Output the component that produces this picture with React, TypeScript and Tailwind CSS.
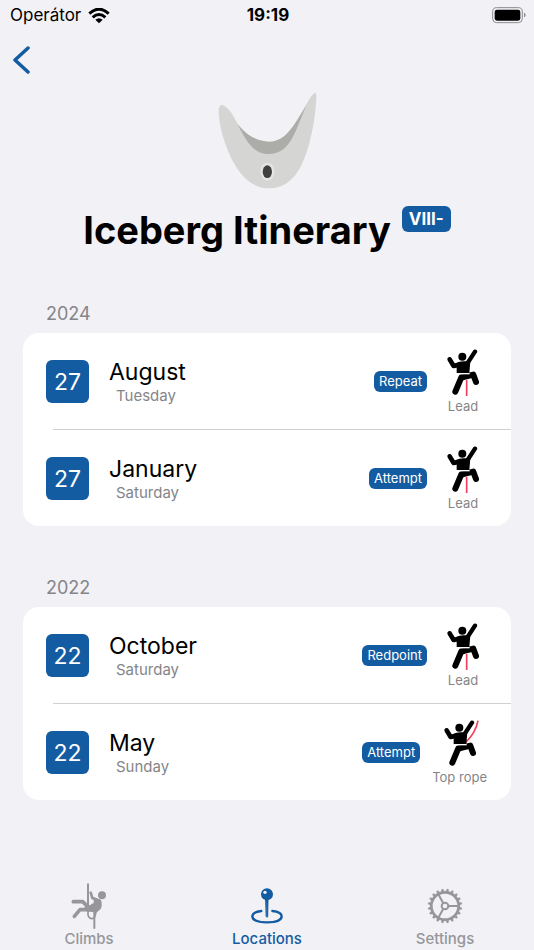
import type { ReactNode } from 'react';

type Style = 'lead' | 'topRope';

interface Ascent {
  day: number;
  month: string;
  weekday: string;
  result: string;
  style: Style;
}

interface Year {
  year: number;
  ascents: Ascent[];
}

const years: Year[] = [
  {
    year: 2024,
    ascents: [
      { day: 27, month: 'August', weekday: 'Tuesday', result: 'Repeat', style: 'lead' },
      { day: 27, month: 'January', weekday: 'Saturday', result: 'Attempt', style: 'lead' },
    ],
  },
  {
    year: 2022,
    ascents: [
      { day: 22, month: 'October', weekday: 'Saturday', result: 'Redpoint', style: 'lead' },
      { day: 22, month: 'May', weekday: 'Sunday', result: 'Attempt', style: 'topRope' },
    ],
  },
];

function StatusBar() {
  return (
    <div className="grid grid-cols-3 items-center h-8 pl-[10px] pr-2">
      <div className="flex items-center gap-[7px] text-[17px]">
        <span>Operátor</span>
        <svg width="22" height="16" viewBox="0 0 66 48" fill="none" stroke="#000" strokeWidth="9">
          <path d="M4 17Q33-10 62 17" />
          <path d="M14 28Q33 11 52 28" />
          <path d="M22 35L33 46L44 35Q33 26 22 35Z" fill="#000" stroke="none" />
        </svg>
      </div>
      <span className="text-center text-[17px] font-bold">19:19</span>
      <svg className="justify-self-end" width="34" height="18" viewBox="0 0 102 54">
        <rect x="2" y="2" width="89" height="45" rx="12" fill="none" stroke="#8b8b8f" strokeWidth="3" />
        <rect x="8" y="8" width="77" height="33" rx="7" />
        <path d="M96 17Q101 18 101 24T96 31Z" fill="#8b8b8f" />
      </svg>
    </div>
  );
}

function Hold() {
  return (
    <svg width="100" height="96" viewBox="51 39 300 288">
      <path
        d="M90 98C120 150 160 185 208 185C260 185 285 130 328 60L332 100L270 230H140Z"
        fill="#acaca9"
      />
      <path
        d="M56 88C57 76 65 71 75 79C84 86 93 96 100 108C130 163 150 222 206 222C270 222 285 155 316 83C323 66 332 48 343 39C348 37 350 45 349 58C345 120 331 205 302 260C281 301 248 325 207 325C164 325 130 298 105 255C77 207 55 137 56 88Z"
        fill="#d5d5d4"
      />
      <ellipse cx="202" cy="275" rx="21" ry="27" fill="#e6e6e5" />
      <ellipse cx="202" cy="275" rx="14" ry="19" fill="#414141" />
    </svg>
  );
}

function Climber({ style }: { style: Style }) {
  return (
    <svg width="40" height="48" viewBox="39 29 120 144">
      {style === 'lead' ? (
        <path d="M110 122V170" stroke="#f0405c" strokeWidth="5" />
      ) : (
        <path d="M153 31Q146 68 116 96" fill="none" stroke="#f0405c" strokeWidth="5" />
      )}
      <circle cx="97" cy="52" r="12" />
      <path d="M76 72Q90 65 104 66L121 66L118 101H80V84Z" />
      <g fill="none" stroke="#000" strokeLinecap="round" strokeLinejoin="round">
        <path d="M59 60L71 80L88 76" strokeWidth="14" />
        <path d="M135 37L112 72" strokeWidth="13" />
        <path d="M94 114L76 157" strokeWidth="18" />
        <path d="M97 114L130 106L138 128" strokeWidth="18" />
      </g>
      <path d="M78 103H119" stroke="#fff" strokeWidth="4" />
    </svg>
  );
}

function AscentRow({ ascent }: { ascent: Ascent }) {
  return (
    <li className="group">
      <div className="flex items-center h-24 pl-[23px] pr-6">
        <span className="flex items-center justify-center size-[43px] pt-[2px] rounded-md bg-[#145ca2] text-white text-[23px]">
          {ascent.day}
        </span>
        <div className="ml-5 pt-[2px]">
          <p className="text-[23px] leading-7">{ascent.month}</p>
          <p className="pl-[7px] text-[15px] leading-5 text-[#858589]">{ascent.weekday}</p>
        </div>
        <span className="ml-auto mr-3 px-[5px] rounded-md bg-[#145ca2] text-white text-[13px] leading-[21px]">
          {ascent.result}
        </span>
        <div className="flex flex-col items-center min-w-12 pt-[2px]">
          <Climber style={ascent.style} />
          <span className="text-[13px] leading-[18px] text-[#858589]">
            {ascent.style === 'lead' ? 'Lead' : 'Top rope'}
          </span>
        </div>
      </div>
      <div className="ml-[30px] h-px bg-[#d0d0d3] group-last:hidden" />
    </li>
  );
}

function ClimbsIcon() {
  return (
    <svg width="36" height="46" viewBox="64 25 108 138" fill="none" stroke="currentColor" strokeLinecap="round" strokeLinejoin="round">
      <path d="M115 29V92M134 112V160" strokeWidth="6" />
      <path d="M115 110V120Q117 132 128 132Q138 128 138 114" strokeWidth="5" />
      <circle cx="157" cy="62" r="12" fill="currentColor" stroke="none" />
      <path d="M123 54L128 70L149 78" strokeWidth="8" />
      <path d="M134 70L152 77L154 94L138 111L111 108L106 99L120 94L134 86Z" fill="currentColor" strokeWidth="4" />
      <path d="M71 81H99L117 99" strokeWidth="11" />
      <path d="M74 125L91 105L122 105" strokeWidth="11" />
      <path d="M152 82L151 100L135 115" strokeWidth="7" />
    </svg>
  );
}

function LocationsIcon() {
  return (
    <svg width="36" height="46" viewBox="71 25 108 138" fill="none" stroke="currentColor" strokeLinecap="round">
      <path d="M108 109C91 111 81 117 81 125C81 136 98 143 125 143S169 136 169 125C169 117 159 111 141 109" strokeWidth="7" />
      <circle cx="125" cy="59" r="18" fill="currentColor" stroke="none" />
      <path d="M122 75H128L127 126Q125 130 123 126Z" fill="currentColor" strokeWidth="3" />
      <circle cx="119" cy="53" r="5" fill="#f2f1f6" stroke="none" />
    </svg>
  );
}

function SettingsIcon() {
  const teeth = Array.from({ length: 20 }, (_, i) => i * 18);
  return (
    <svg width="36" height="46" viewBox="63 25 108 138" fill="none" stroke="currentColor">
      <circle cx="117" cy="94" r="41" strokeWidth="8" />
      {teeth.map((angle) => (
        <path key={angle} d="M112 52L115 43H119L122 52Z" fill="currentColor" strokeWidth="1" transform={`rotate(${angle + 9} 117 94)`} />
      ))}
      <circle cx="117" cy="94" r="10" strokeWidth="6" />
      <path d="M128 94H156M111 84L98 60M111 104L98 128" strokeWidth="6" />
    </svg>
  );
}

function Tab({ label, active, children }: { label: string; active?: boolean; children: ReactNode }) {
  return (
    <a
      href="#"
      aria-current={active ? 'page' : undefined}
      className={`flex flex-col items-center text-[15px] leading-[19px] font-medium ${active ? 'text-[#145ca2]' : 'text-[#96969b]'}`}
    >
      {children}
      <span>{label}</span>
    </a>
  );
}

export default function App() {
  return (
    <div className="flex flex-col min-h-screen bg-[#f2f1f6] text-black font-['Inter',sans-serif]">
      <StatusBar />

      <header className="h-[58px] px-3 pt-[14px]">
        <button type="button" aria-label="Back" className="block text-[#145ca2]">
          <svg width="20" height="28" viewBox="0 0 20 28" fill="none" stroke="currentColor" strokeWidth="3.5" strokeLinecap="round" strokeLinejoin="round">
            <path d="M16 2L3 14L16 26" />
          </svg>
        </button>
      </header>

      <main className="flex-1 px-[23px]">
        <div className="flex flex-col items-center pt-[3px]">
          <Hold />
          <div className="flex items-start gap-[11px] mt-[17px]">
            <h1 className="text-[38px] leading-[48px] font-bold">Iceberg Itinerary</h1>
            <span className="px-[7px] rounded-md bg-[#145ca2] text-white text-[17px] leading-[26px] font-bold">VIII-</span>
          </div>
        </div>

        <div className="mt-[49px] flex flex-col gap-[51px]">
          {years.map(({ year, ascents }) => (
            <section key={year}>
              <h2 className="pl-[23px] pb-2 text-lg leading-[22px] text-[#858589]">{year}</h2>
              <ul className="rounded-2xl bg-white">
                {ascents.map((ascent) => (
                  <AscentRow key={ascent.month} ascent={ascent} />
                ))}
              </ul>
            </section>
          ))}
        </div>
      </main>

      <nav className="grid grid-cols-3 pb-[2px]">
        <Tab label="Climbs">
          <ClimbsIcon />
        </Tab>
        <Tab label="Locations" active>
          <LocationsIcon />
        </Tab>
        <Tab label="Settings">
          <SettingsIcon />
        </Tab>
      </nav>
    </div>
  );
}
